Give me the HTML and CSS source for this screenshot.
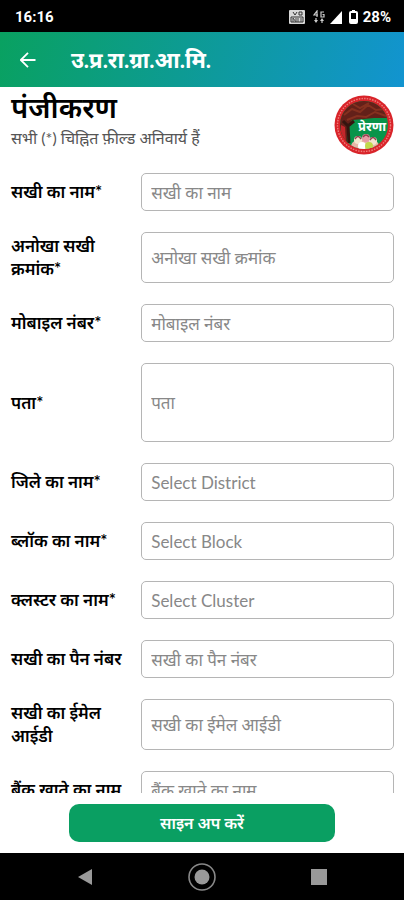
FILE: index.html
```html
<!DOCTYPE html>
<html lang="hi">
<head>
<meta charset="utf-8">
<meta name="viewport" content="width=device-width, initial-scale=1">
<title>पंजीकरण</title>
<link rel="stylesheet" href="styles.css">
</head>
<body>
<div class="app">
  <div class="status">
    <span class="status-time">16:16</span>
    <div class="status-icons">
      <svg width="16" height="14" viewBox="0 0 16 14" aria-hidden="true">
        <rect width="16" height="14" rx="1" fill="#d8d8d8"/>
        <path d="M4 2l2 3 2-3M10 2h3v3h-3zM2 7h12v5H2z" fill="none" stroke="#333" stroke-width="1"/>
        <path d="M4 12V8l3 4V8M9 8v4M12 8v4" fill="none" stroke="#444" stroke-width="1"/>
      </svg>
      <svg class="network" width="12" height="14" viewBox="0 0 12 14" aria-hidden="true">
        <path d="M4 7V1L1 5h4M11 2H8v5h3V4.500H9.500" fill="none" stroke="#ccc" stroke-width="1.200"/>
        <path d="M3 8v3M9 13v-3" stroke="#ccc" stroke-width="1.200"/>
        <path d="M1 10h4l-2 3zM7 11h4L9 8z" fill="#ccc"/>
      </svg>
      <svg width="12" height="13" viewBox="0 0 12 13" aria-hidden="true"><path d="M12 0v13H0z" fill="#fff"/></svg>
      <svg class="battery" width="9" height="14" viewBox="0 0 9 14" aria-hidden="true">
        <path d="M3 0h3v2H3z" fill="#fff"/>
        <rect x="1" y="2" width="7" height="11" rx="1" fill="none" stroke="#fff" stroke-width="2"/>
        <path d="M1 9h7v4H1z" fill="#fff"/>
      </svg>
      <span>28%</span>
    </div>
  </div>

  <header class="appbar">
    <button class="back" type="button" aria-label="वापस">
      <svg width="16" height="16" viewBox="0 0 16 16" aria-hidden="true"><path d="M15.500 8H1M8 .8L.8 8 8 15.200" fill="none" stroke="#fff" stroke-width="1.800"/></svg>
    </button>
    <span class="appbar-title">उ.प्र.रा.ग्रा.आ.मि.</span>
  </header>

  <main class="content">
    <div class="intro">
      <div>
        <h1>पंजीकरण</h1>
        <p>सभी (*) चिह्नित फ़ील्ड अनिवार्य हैं</p>
      </div>
      <svg class="logo" width="60" height="60" viewBox="0 0 60 60" role="img" aria-label="प्रेरणा">
        <defs><clipPath id="disc"><circle cx="30" cy="30" r="24"/></clipPath></defs>
        <circle cx="30" cy="30" r="29.500" fill="#d9242a"/>
        <circle cx="30" cy="30" r="26.500" fill="none" stroke="#ee7d7b" stroke-width="1.400" stroke-dasharray="1.500 1.200"/>
        <g clip-path="url(#disc)">
          <rect width="60" height="60" fill="#08944a"/>
          <path d="M0 0h60v23H40l-10 1-12 1-4 6-1 10 2 19H0z" fill="#632019"/>
          <path d="M10 20l8-6 8 3 8-7 8 5 9-1M13 25l10-4 9 1 9-5 11 4M19 9l7 4 9-5" fill="none" stroke="#85301f" stroke-width="2"/>
          <path d="M7 30l4 2 1 18-6-6z" fill="#c2262a"/>
          <path d="M9 26l5 5 1 17M14 31l6-5" fill="none" stroke="#35150f" stroke-width="3"/>
          <path d="M16 55c1-8 5-11 9-8 4-5 9-5 11 0 6-3 9 0 10 7z" fill="#e8b7a8"/>
          <circle cx="24" cy="45" r="4" fill="#f3e7cf"/>
          <circle cx="32" cy="43" r="4" fill="#e89aa5"/>
          <circle cx="39" cy="46" r="4" fill="#f2e3d0"/>
          <circle cx="28" cy="51" r="4" fill="#fff"/>
          <circle cx="35" cy="51" r="4" fill="#c1d94b"/>
          <path d="M21 44q3-5 6 0M29 42q3-4 6 0M36 45q3-5 6 0" fill="none" stroke="#934050" stroke-width="1.500"/>
        </g>
        <text x="38" y="36" text-anchor="middle" class="logo-text">प्रेरणा</text>
      </svg>
    </div>

    <form class="form" id="signup">
      <div class="row"><label for="name">सखी का नाम*</label><input id="name" type="text" placeholder="सखी का नाम"></div>
      <div class="row"><label for="code">अनोखा सखी क्रमांक*</label><input id="code" type="text" placeholder="अनोखा सखी क्रमांक"></div>
      <div class="row"><label for="mobile">मोबाइल नंबर*</label><input id="mobile" type="tel" placeholder="मोबाइल नंबर"></div>
      <div class="row row-tall"><label for="address">पता*</label><input id="address" type="text" placeholder="पता"></div>
      <div class="row"><label for="district">जिले का नाम*</label><select id="district"><option>Select District</option></select></div>
      <div class="row"><label for="block">ब्लॉक का नाम*</label><select id="block"><option>Select Block</option></select></div>
      <div class="row"><label for="cluster">क्लस्टर का नाम*</label><select id="cluster"><option>Select Cluster</option></select></div>
      <div class="row"><label for="pan">सखी का पैन नंबर</label><input id="pan" type="text" placeholder="सखी का पैन नंबर"></div>
      <div class="row"><label for="email">सखी का ईमेल आईडी</label><input id="email" type="email" placeholder="सखी का ईमेल आईडी"></div>
      <div class="row"><label for="bank">बैंक खाते का नाम</label><input id="bank" type="text" placeholder="बैंक खाते का नाम"></div>
    </form>
  </main>

  <div class="actions"><button class="submit" type="submit" form="signup">साइन अप करें</button></div>

  <nav class="sysnav">
    <button type="button" aria-label="Back"><svg width="28" height="28" viewBox="0 0 28 28"><path d="M21 6v16L7 14z" fill="#999"/></svg></button>
    <button type="button" aria-label="Home"><svg width="28" height="28" viewBox="0 0 28 28"><circle cx="14" cy="14" r="13" fill="none" stroke="#888" stroke-width="1.600"/><circle cx="14" cy="14" r="7.500" fill="#999"/></svg></button>
    <button type="button" aria-label="Recents"><svg width="28" height="28" viewBox="0 0 28 28"><path d="M6 6h16v16H6z" fill="#999"/></svg></button>
  </nav>
</div>
</body>
</html>
```
FILE: styles.css
```css
* { box-sizing: border-box; }

body {
  margin: 0;
  background: #fff;
  color: #000;
  font-family: Lato, "Noto Sans", "Noto Sans Devanagari", sans-serif;
}

button { border: 0; padding: 0; background: none; font: inherit; }
svg { display: block; }

.app { display: flex; flex-direction: column; height: 100vh; }

.status {
  display: flex;
  justify-content: space-between;
  align-items: center;
  height: 32px;
  padding: 2px 13px 0 15px;
  background: #000;
  color: #fff;
  font: 700 15px/20px Roboto, sans-serif;
}
.status-icons { display: flex; align-items: center; gap: 5px; }
.network { margin-left: 3px; }
.battery { margin-left: 2px; }

.appbar {
  display: flex;
  align-items: center;
  gap: 35px;
  height: 55px;
  padding: 0 20px;
  background: linear-gradient(105deg, #09a160, #1294d0);
  color: #fff;
}
.appbar-title { font-size: 22px; line-height: 30px; font-weight: 700; }

.content {
  flex: 1;
  min-height: 0;
  overflow-y: auto;
  scrollbar-width: none;
  padding: 0 10px 0 11px;
}

.intro { display: flex; justify-content: space-between; padding-top: 5px; }
.intro h1 { margin: 0 0 2px; font-size: 29px; line-height: 30px; font-weight: 600; }
.intro p { margin: 0; font-size: 16px; line-height: 28px; color: #555; }
.logo { margin-top: 3px; }
.logo-text { font-size: 13px; font-weight: 700; fill: #fff; }

.form { display: flex; flex-direction: column; gap: 21px; padding: 18px 0 21px; }

.row { display: grid; grid-template-columns: 34% 1fr; min-height: 38px; }
.row-tall { min-height: 79px; }
.row label {
  align-self: center;
  padding: 2px 12px 3px 0;
  font-size: 17px;
  line-height: 23px;
  font-weight: 600;
}
.row input, .row select {
  appearance: none;
  width: 100%;
  min-width: 0;
  height: 100%;
  padding: 0 9px;
  border: 1px solid #b5b5b5;
  border-radius: 5px;
  background: #fff;
  color: #888;
  font: inherit;
  font-size: 17px;
}
.row input::placeholder { color: #888; opacity: 1; }

.actions { display: flex; justify-content: center; padding: 11px 0; }
.submit {
  width: 66%;
  height: 38px;
  border-radius: 10px;
  background: #0a9f62;
  color: #fff;
  font-size: 16px;
  font-weight: 600;
}

.sysnav {
  display: flex;
  justify-content: space-around;
  align-items: center;
  height: 47px;
  padding: 0 26px;
  background: #000;
}
```
